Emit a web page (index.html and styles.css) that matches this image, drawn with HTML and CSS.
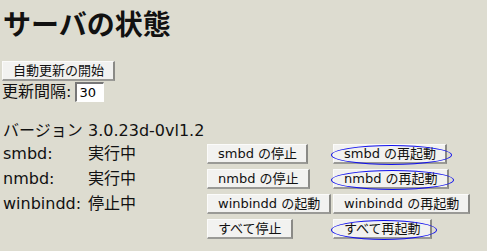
FILE: index.html
```html
<!DOCTYPE html>
<html lang="ja">
<head>
  <meta charset="UTF-8">
  <title>サーバの状態</title>
  <link rel="stylesheet" href="styles.css">
</head>
<body>
  <h2 class="title">サーバの状態</h2>
  <form class="refresh">
    <button type="button" class="btn">自動更新の開始</button>
    <div class="interval">更新間隔: <input type="text" value="30" class="interval-input"></div>
  </form>
  <div class="status">
    <div class="label">バージョン</div>
    <div class="value">3.0.23d-0vl1.2</div>
    <div></div>
    <div></div>

    <div class="label">smbd:</div>
    <div class="value">実行中</div>
    <div><button type="button" class="btn">smbd の停止</button></div>
    <div><span class="ringed"><button type="button" class="btn">smbd の再起動</button><span class="ring"></span></span></div>

    <div class="label">nmbd:</div>
    <div class="value">実行中</div>
    <div><button type="button" class="btn">nmbd の停止</button></div>
    <div><span class="ringed"><button type="button" class="btn">nmbd の再起動</button><span class="ring"></span></span></div>

    <div class="label">winbindd:</div>
    <div class="value">停止中</div>
    <div><button type="button" class="btn">winbindd の起動</button></div>
    <div><button type="button" class="btn">winbindd の再起動</button></div>

    <div></div>
    <div></div>
    <div><button type="button" class="btn">すべて停止</button></div>
    <div><span class="ringed"><button type="button" class="btn">すべて再起動</button><span class="ring"></span></span></div>
  </div>
</body>
</html>
```

FILE: styles.css
```css
body {
  font-family: 'DejaVu Sans', 'Noto Sans CJK JP', sans-serif;
  font-size: 16px;
  background: #dddcd0;
  color: #111;
  margin: 0;
  padding: 0 2px;
}
.title {
  font-family: 'DejaVu Sans', 'Noto Sans CJK JP', sans-serif;
  font-size: 28px;
  font-weight: bold;
  margin: 10px 0 0 1px;
  line-height: 32px;
}
.refresh {
  margin: 18px 0 0 0;
}
.btn {
  font-family: 'DejaVu Sans', 'Noto Sans CJK JP', sans-serif;
  font-size: 13px;
  line-height: 15px;
  white-space: nowrap;
  color: #111;
  background: #f2f2f0;
  border: 1px solid #fbfbfa;
  border-right: 2px solid #8a8a86;
  border-bottom: 2px solid #9a9a96;
  padding: 1px 9px 1px 10px;
  margin: 0;
  border-radius: 0;
}
.interval {
  display: flex;
  align-items: center;
  gap: 4px;
  margin-top: 1px;
  line-height: 20px;
}
.interval-input {
  width: 22px;
  height: 15px;
  font-family: 'DejaVu Sans', sans-serif;
  font-size: 13px;
  padding: 1px 2px;
  border: 1px solid #fff;
  border-left: 2px solid #777;
  border-top: 2px solid #777;
  background: #fff;
  margin: 0;
}
.status {
  display: grid;
  grid-template-columns: 85px 119px 126px auto;
  grid-auto-rows: 25px;
  grid-template-rows: 21px;
  align-items: center;
  margin: 18px 0 0 1px;
}
.status .label,
.status .value {
  line-height: 20px;
}
.ringed {
  position: relative;
  display: inline-block;
}
.ring {
  position: absolute;
  left: -2px;
  right: -5px;
  top: 2px;
  bottom: -1px;
  border: 1px solid #1010ee;
  border-radius: 50%;
  pointer-events: none;
}
```
